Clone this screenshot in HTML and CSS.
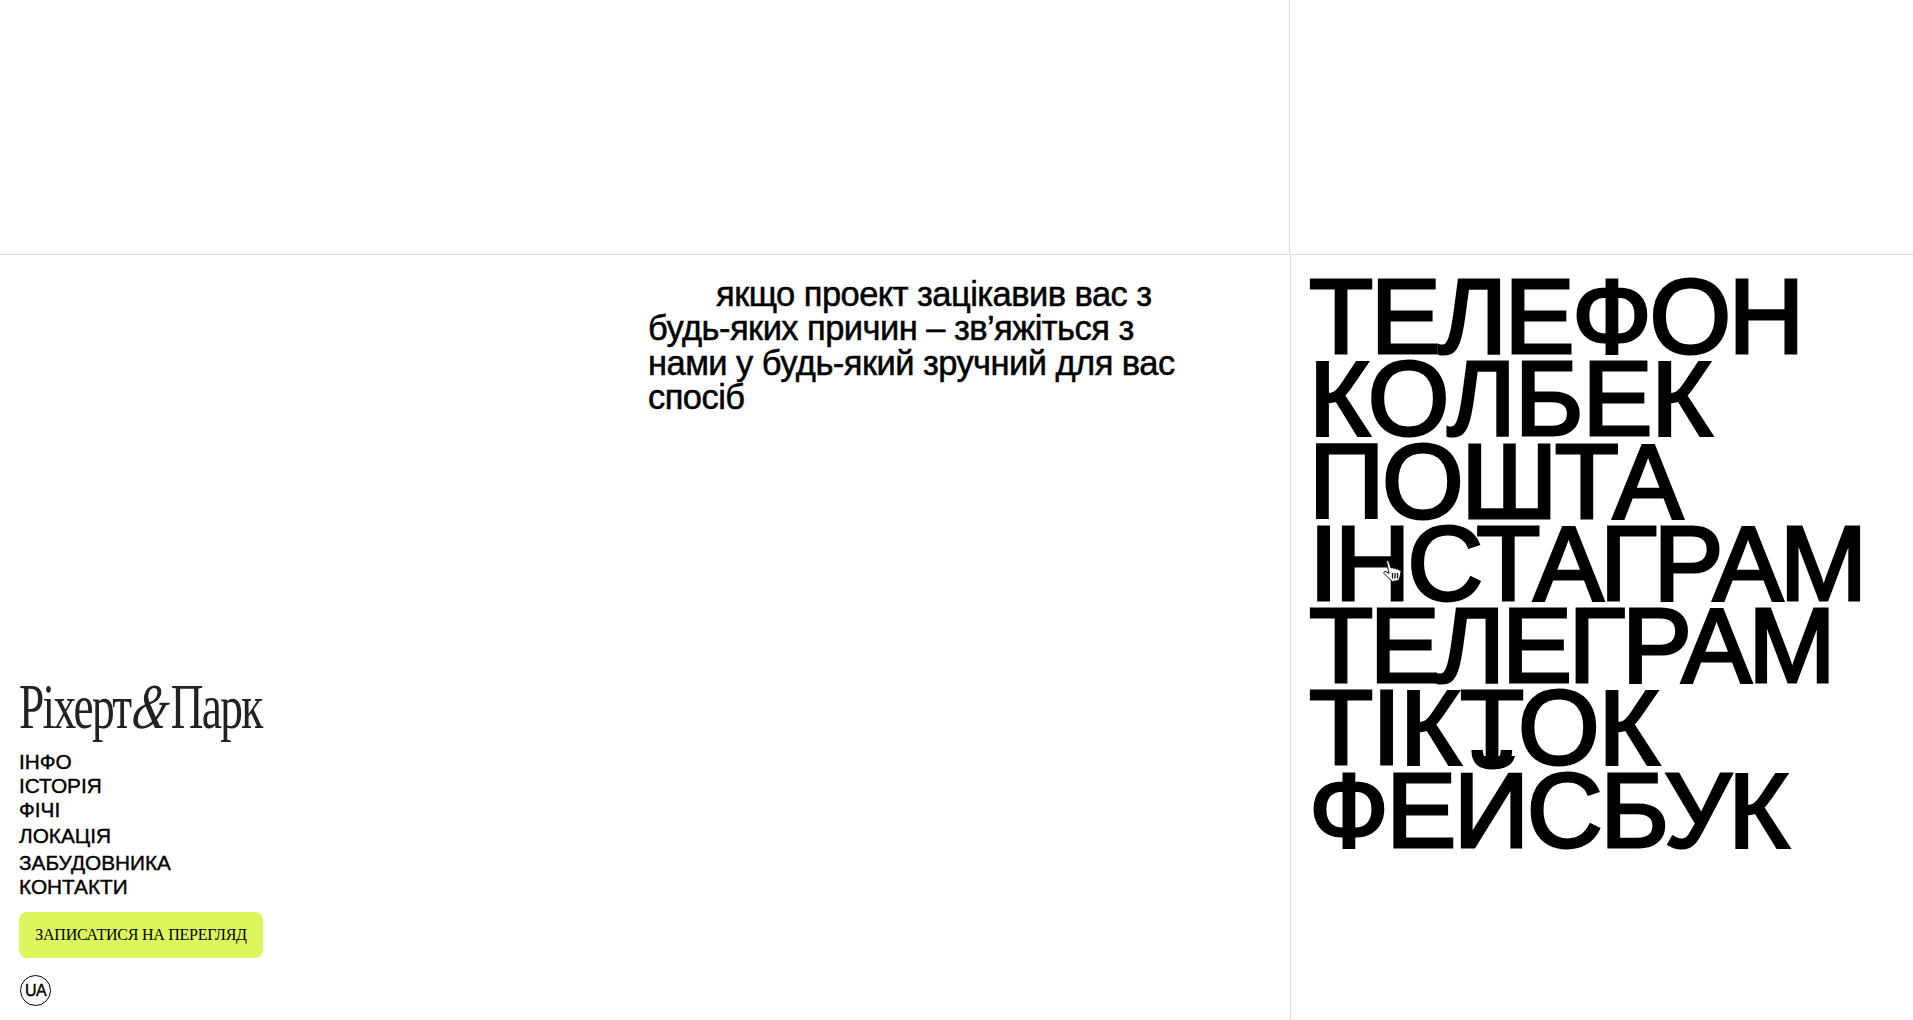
FILE: index.html
```html
<!DOCTYPE html>
<html lang="uk">

<head>
    <meta charset="UTF-8">
    <meta name="viewport" content="width=device-width, initial-scale=1.0">
    <title>Контакти</title>
    <link rel="stylesheet" href="styles.css">
</head>

<body>
    <div class="page">
        <div class="top-left"></div>
        <div class="top-right"></div>

        <aside class="sidebar">
            <a class="logo" href="#"><span>Ріхерт</span><em>&amp;</em><span>Парк</span></a>
            <nav class="menu">
                <a href="#">ІНФО</a>
                <a href="#">ІСТОРІЯ</a>
                <a href="#">ФІЧІ</a>
                <a class="menu-gap" href="#">ЛОКАЦІЯ</a>
                <a class="menu-gap" href="#">ЗАБУДОВНИКА</a>
                <a href="#">КОНТАКТИ</a>
            </nav>
            <a class="book" href="#">ЗАПИСАТИСЯ НА ПЕРЕГЛЯД</a>
            <a class="lang" href="#">UA</a>
        </aside>

        <main class="intro">
            <p>якщо проект зацікавив вас з будь-яких причин – зв’яжіться з нами у будь-який зручний для вас спосіб</p>
        </main>

        <section class="links">
            <a class="mid" href="#">ТЕЛЕФОН</a>
            <a class="wide" href="#">КОЛБЕК</a>
            <a class="mid" href="#">ПОШТА</a>
            <a href="#">ІНСТАГРАМ</a>
            <a href="#">ТЕЛЕГРАМ</a>
            <a class="wide" href="#">ТІКТОК</a>
            <a class="mid" href="#">ФЕЙСБУК</a>

            <!-- hand pointer sitting over the list -->
            <svg class="pointer" width="19" height="22" viewBox="0 0 19 22">
                <path d="M3.5 1.2 C4.5 0.4 5.6 0.8 6 1.8 L8 8 L9.5 7.5 L10.5 8.6 L12 8 L13 9.2 L14.5 8.8 L15.6 10 L17 10 L18 11.5 L17 17 L15.5 20.5 L9.5 21.5 L7.5 20 L1 13.5 C0.4 12.4 1.6 11 3 11.6 L6 13.5 Z" fill="#fff" stroke="#111" stroke-width="1" />
                <path d="M9.5 13v5.5M12 13v5.5M14.5 13v5.5" stroke="#111" stroke-width="1.3" fill="none" />
            </svg>
            <!-- hook under the second Т of ТІКТОК -->
            <svg class="hook" width="38" height="14" viewBox="0 0 38 14">
                <path d="M0 0 H9 C10 3 12 4.5 14 5 V0 H24 V5 C26 4.5 28 3 29 0 H38 C36 9 28 13 19 13 C10 13 2 9 0 0 Z" fill="#000" />
            </svg>
        </section>
    </div>
</body>

</html>
```

FILE: styles.css
```css
* {
    box-sizing: border-box;
}

html,
body {
    margin: 0;
    padding: 0;
    height: 100%;
    background: #fff;
    overflow: hidden;
}

body {
    font-family: 'Liberation Sans', Arial, sans-serif;
    color: #000;
}

a {
    color: inherit;
    text-decoration: none;
}

.page {
    display: grid;
    grid-template-columns: 648px 642px 1fr;
    grid-template-rows: 255px 1fr;
    height: 1020px;
}

.top-left {
    grid-column: 1 / 3;
    border-right: 1px solid #ddd;
    border-bottom: 1px solid #ddd;
}

.top-right {
    border-bottom: 1px solid #ddd;
}

.sidebar {
    display: flex;
    flex-direction: column;
    justify-content: flex-end;
    align-items: flex-start;
    padding: 0 0 14px 19px;
}

.logo {
    display: flex;
    align-items: baseline;
    justify-content: space-between;
    width: 337px;
    font-family: 'Liberation Serif', serif;
    font-size: 63px;
    line-height: 58px;
    letter-spacing: -2.3px;
    color: #222;
    transform: scaleX(0.72);
    transform-origin: left;
}

.logo em {
    display: inline-block;
    font-size: 64px;
    font-style: italic;
    transform: skewX(-14deg);
}

.menu {
    display: flex;
    flex-direction: column;
    margin-top: 14px;
    font-size: 20.8px;
    line-height: 24.2px;
    -webkit-text-stroke: 0.4px #000;
}

.menu-gap {
    margin-top: 2px;
}

.book {
    display: flex;
    align-items: center;
    justify-content: center;
    width: 244px;
    height: 46px;
    margin-top: 13px;
    background: #dcf65c;
    border-radius: 8px;
    font-family: 'Liberation Serif', serif;
    font-size: 16px;
    letter-spacing: -0.25px;
}

.lang {
    display: flex;
    align-items: center;
    justify-content: center;
    width: 31px;
    height: 31px;
    margin: 17px 0 0 1px;
    border: 1.5px solid #000;
    border-radius: 50%;
    font-size: 16px;
    letter-spacing: -0.5px;
    -webkit-text-stroke: 0.4px #000;
}

.intro {
    padding: 22px 20px 0 0;
}

.intro p {
    margin: 0;
    width: 530px;
    font-size: 34.5px;
    line-height: 34.3px;
    letter-spacing: -0.55px;
    text-indent: 68px;
    -webkit-text-stroke: 0.5px #000;
}

.links {
    position: relative;
    display: flex;
    flex-direction: column;
    align-items: flex-start;
    border-left: 1px solid #ddd;
    padding: 21px 0 0 18px;
    font-size: 105px;
    line-height: 82.3px;
    letter-spacing: -3.4px;
    -webkit-text-stroke: 3px #000;
}

.links .mid {
    letter-spacing: -2.5px;
}

.links .wide {
    letter-spacing: -1.2px;
}

.pointer {
    position: absolute;
    left: 92px;
    top: 305px;
}

.hook {
    position: absolute;
    left: 186px;
    top: 501px;
}
```
